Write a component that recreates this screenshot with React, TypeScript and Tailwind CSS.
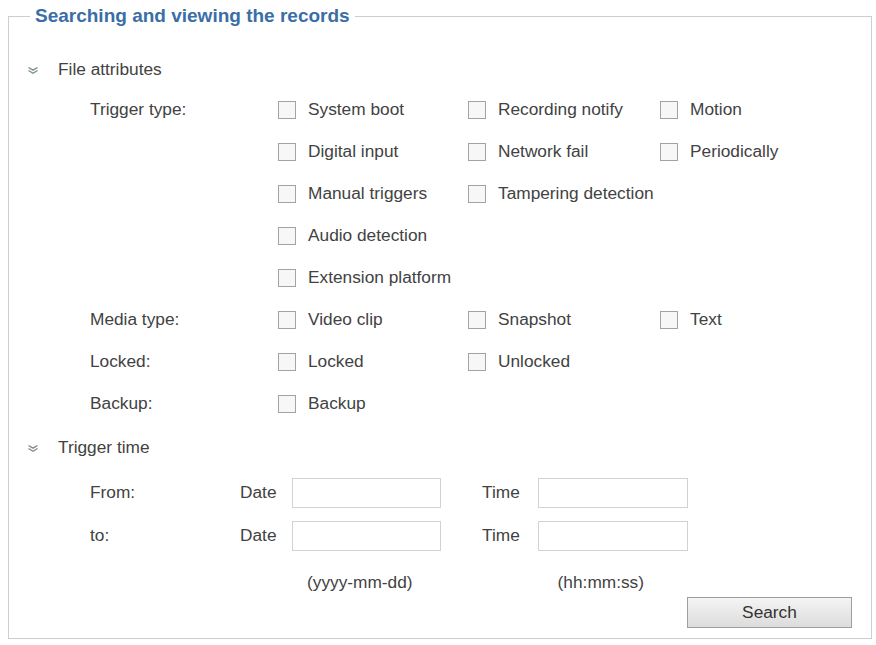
import React from "react";

const font = { fontFamily: '"Liberation Sans", Arial, sans-serif' };

function Chevron() {
  return (
    <svg width="12" height="9" viewBox="0 0 12 9" className="shrink-0">
      <path d="M1.5 1.5 L6 4.2 L10.5 1.5" fill="none" stroke="#7b8f88" strokeWidth="1.4" />
      <path d="M1.5 4.5 L6 7.3 L10.5 4.5" fill="none" stroke="#7b8f88" strokeWidth="1.4" />
    </svg>
  );
}

function Box({ label }: { label: string }) {
  return (
    <label className="flex items-center">
      <span className="w-[18px] h-[18px] border border-[#a3a3a3] bg-[#f7f7f7] shrink-0" />
      <span className="ml-[12px] whitespace-nowrap">{label}</span>
    </label>
  );
}

const rows: { label: string; items: string[] }[] = [
  { label: "Trigger type:", items: ["System boot", "Recording notify", "Motion"] },
  { label: "", items: ["Digital input", "Network fail", "Periodically"] },
  { label: "", items: ["Manual triggers", "Tampering detection"] },
  { label: "", items: ["Audio detection"] },
  { label: "", items: ["Extension platform"] },
  { label: "Media type:", items: ["Video clip", "Snapshot", "Text"] },
  { label: "Locked:", items: ["Locked", "Unlocked"] },
  { label: "Backup:", items: ["Backup"] },
];

function TimeRow({ label, h }: { label: string; h: string }) {
  return (
    <div className={`flex items-center pl-[81px] ${h}`}>
      <span className="w-[150px]">{label}</span>
      <span className="w-[52px]">Date</span>
      <input className="w-[149px] h-[30px] border border-[#d2d2d2] bg-white outline-none" />
      <span className="ml-[41px] w-[56px]">Time</span>
      <input className="w-[150px] h-[30px] border border-[#d2d2d2] bg-white outline-none" />
    </div>
  );
}

export default function App() {
  return (
    <div style={font} className="w-[876px] h-[645px] bg-white text-[17.3px] text-[#424242] overflow-hidden pt-[5px]">
      <fieldset className="ml-[8px] mr-[4px] border border-[#cdcdcd] p-0 m-0 h-[634px] min-w-0">
        <legend className="ml-[21px] px-[5px] text-[19px] leading-[22px] font-bold text-[#3b6ea6]">
          Searching and viewing the records
        </legend>
        <div className="pt-[24px] flex flex-col">
          <div className="flex items-center h-[38px] pl-[18px]">
            <Chevron />
            <span className="ml-[19px]">File attributes</span>
          </div>
          {rows.map((r, i) => (
            <div key={i} className="flex items-center h-[42px] pl-[81px]">
              <span className="w-[188px] shrink-0">{r.label}</span>
              <div className="w-[190px] shrink-0">{r.items[0] && <Box label={r.items[0]} />}</div>
              <div className="w-[192px] shrink-0">{r.items[1] && <Box label={r.items[1]} />}</div>
              <div>{r.items[2] && <Box label={r.items[2]} />}</div>
            </div>
          ))}
          <div className="flex items-center h-[46px] pl-[18px]">
            <Chevron />
            <span className="ml-[19px]">Trigger time</span>
          </div>
          <TimeRow label="From:" h="h-[43px]" />
          <TimeRow label="to:" h="h-[43px]" />
          <div className="flex h-[20px] leading-[20px] mt-[15px]">
            <span className="ml-[298px]">(yyyy-mm-dd)</span>
            <span className="ml-[145px]">(hh:mm:ss)</span>
          </div>
          <div className="flex justify-end pr-[19px] mt-[5px]">
            <button className="w-[165px] h-[31px] border border-[#9e9e9e] bg-gradient-to-b from-[#f4f4f4] to-[#dcdcdc] text-[17.3px] text-[#333]">
              Search
            </button>
          </div>
        </div>
      </fieldset>
    </div>
  );
}
